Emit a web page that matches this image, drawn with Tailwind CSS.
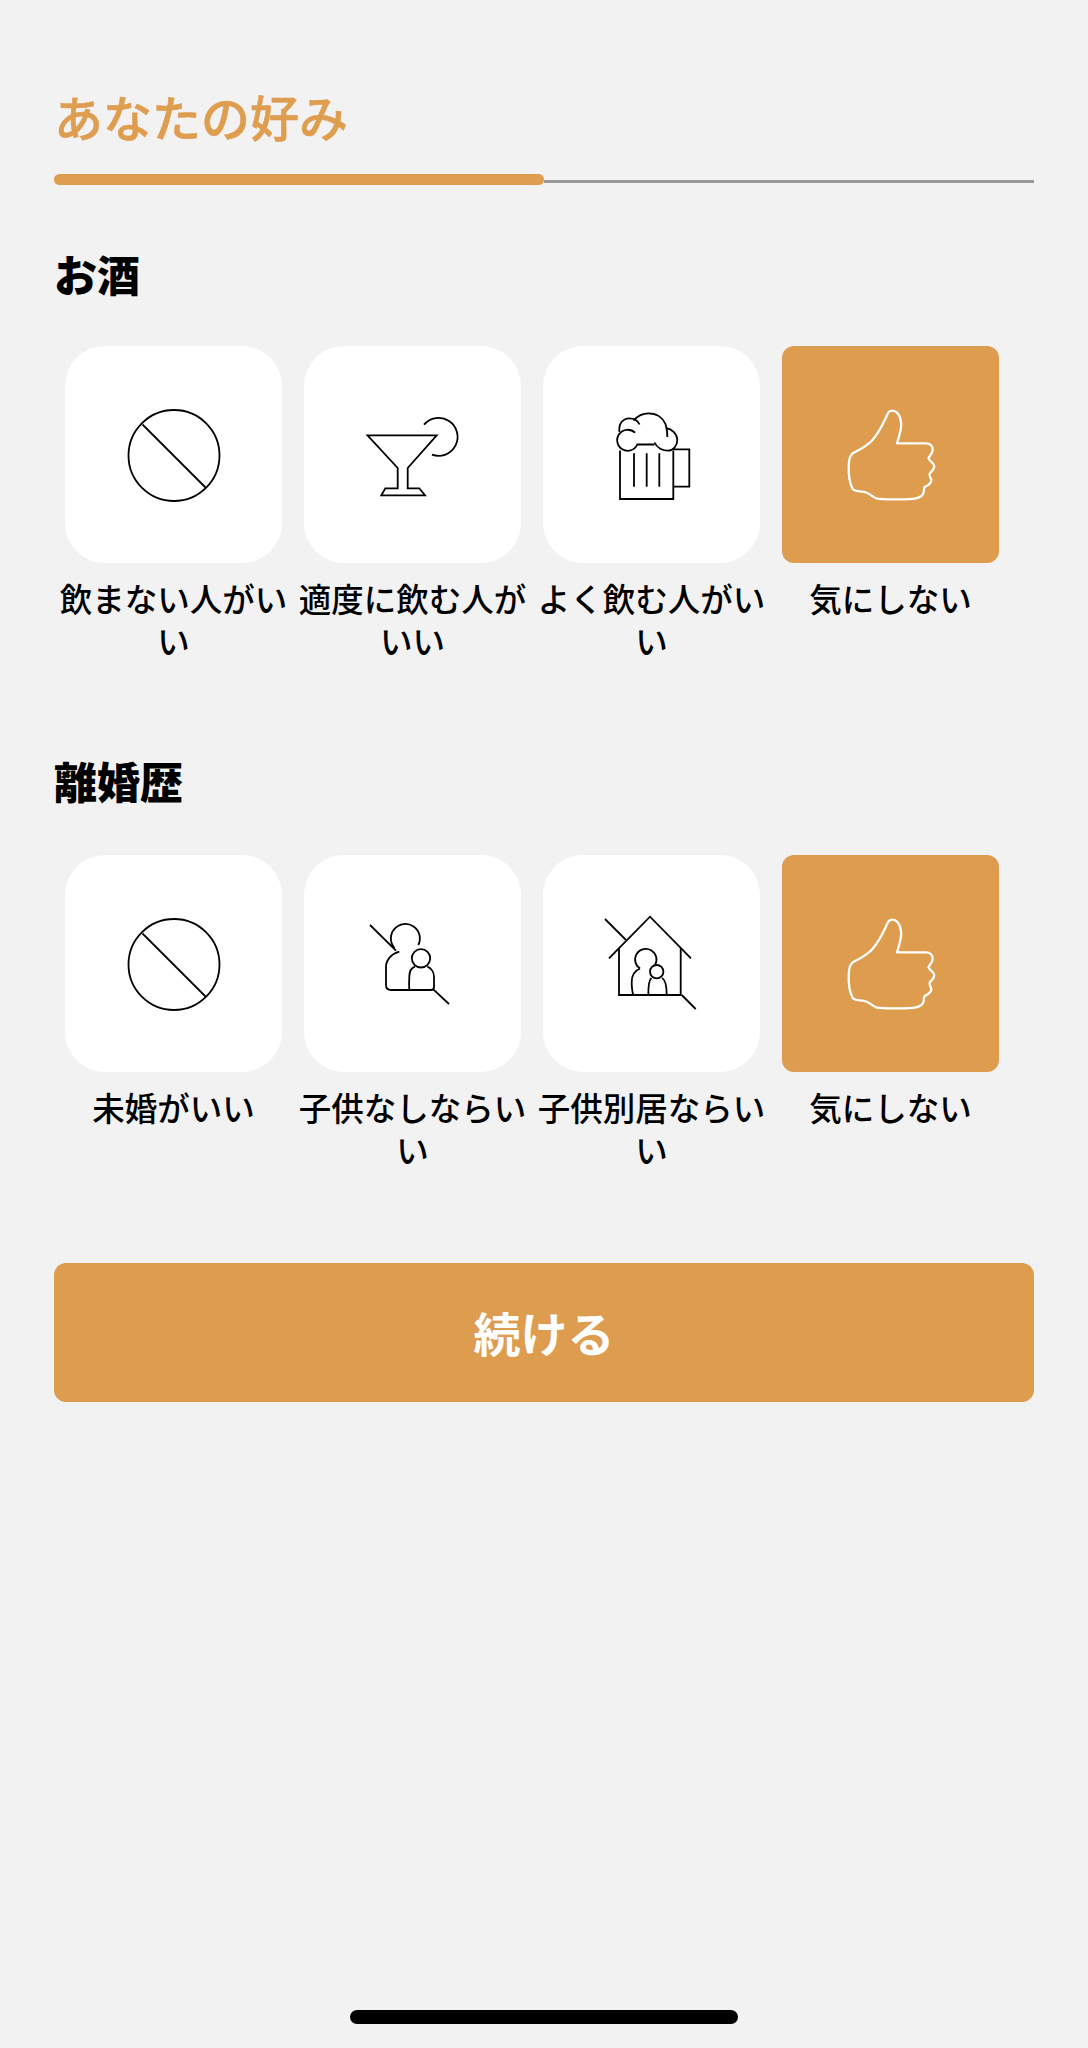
<!DOCTYPE html>
<html lang="ja">
<head>
  <meta charset="UTF-8" />
  <meta name="viewport" content="width=device-width, initial-scale=1.0" />
  <title>あなたの好み</title>
  <script src="https://cdn.jsdelivr.net/npm/@tailwindcss/browser@4"></script>
</head>
<body class="bg-[#f2f2f2] font-['Noto_Sans_CJK_JP',sans-serif] text-black">
<div class="relative h-[2048px] px-[54px] pt-[81px]">

  <!-- Header -->
  <h1 class="text-[49px] leading-[70px] font-medium text-[#df9d50] [-webkit-text-stroke:0.6px_#df9d50]">あなたの好み</h1>
  <div class="mt-[23px] h-[11px] flex items-center">
    <div class="w-[490px] h-[11px] rounded-full bg-[#df9d50]"></div>
    <div class="flex-1 h-[3px] mt-[4px] bg-[#999999]"></div>
  </div>

  <!-- お酒 -->
  <h2 class="mt-[58px] text-[43px] leading-[60px] font-black">お酒</h2>
  <div class="mt-[43px] grid grid-cols-[repeat(4,239px)]">
    <div>
      <div class="mx-[11px] w-[217px] h-[217px] rounded-[40px] bg-white">
        <svg width="217" height="217" fill="none" stroke="#000" stroke-width="1.8"><circle cx="109" cy="109.5" r="45.5"/><path d="M77.5 78.5 140.5 141.5"/></svg>
      </div>
      <p class="mt-[14px] text-center text-[32.5px] leading-[42px] font-medium">飲まない人がいい</p>
    </div>
    <div>
      <div class="mx-[11px] w-[217px] h-[217px] rounded-[40px] bg-white">
        <svg width="217" height="217" fill="none" stroke="#000" stroke-width="1.8"><path d="M63.5 89.3H132.7L103.7 122V142.3H115.3L121 149.3H77.3L81.3 142.3H93.7V122Z"/><path d="M120 78.7A19 19 0 1 1 128 108.7"/></svg>
      </div>
      <p class="mt-[14px] text-center text-[32.5px] leading-[42px] font-medium">適度に飲む人がいい</p>
    </div>
    <div>
      <div class="mx-[11px] w-[217px] h-[217px] rounded-[40px] bg-white">
        <svg width="217" height="217" fill="none" stroke="#000" stroke-width="1.8"><path d="M77 104.5V153H130.3V104.5"/><path d="M130.3 103.3H146.3V140.7H130.3"/><path d="M91 107.3V140.7M103.7 107.3V140.7M116.3 107.3V140.7"/><path d="M92 86.7A10.5 10.5 0 1 0 94.3 98.5H111.5"/><path d="M76.5 86C75 77 81 72.3 86 72.3C91 72.3 95 74.5 96.5 78.5"/><path d="M90.5 74.5C95 69.5 100 67.3 105.5 67.3C114 67.3 120 72 122.5 78C124 83 124.5 87 124.3 91"/><path d="M123 82C129 83 134.3 88 134.3 94C134.3 100 130 104.7 125 104.7C120 104.7 114 102 111.5 96.5"/></svg>
      </div>
      <p class="mt-[14px] text-center text-[32.5px] leading-[42px] font-medium">よく飲む人がいい</p>
    </div>
    <div>
      <div class="mx-[11px] w-[217px] h-[217px] rounded-[12px] bg-[#de9c4f]">
        <svg width="217" height="217" fill="none" stroke="#fff" stroke-width="2.3" stroke-linejoin="round"><path d="M115 97.3C118 88 120 80 119 76C118 68 114 64.5 110 64.7C106.5 65 105.5 67.5 104 71.5C100 80 97 87 90 94.5C84 101 76 104.5 70.7 107.3C67.5 110 67 113 66.8 118C66.3 127 67 136 70.7 143C73 145.5 77 145 81 145.7C87 146.5 89 150 94 152.3C100 153.5 108 153.3 115.7 153.3C123 153.3 129 153.3 134 152.3C139 151.3 141 149.5 141.7 146C142 143.5 141.5 142 143 140.7C146 139 149.5 138 149.3 134C149 131.5 146.5 130 147.8 127.5C149.5 125 152.5 123.5 152.3 120C152 116.5 147 115 146.5 112.3C146.8 110 150.7 108 150.7 104C150.7 100 148 97.3 144 97.3Z"/></svg>
      </div>
      <p class="mt-[14px] text-center text-[32.5px] leading-[42px] font-medium">気にしない</p>
    </div>
  </div>

  <!-- 離婚歴 -->
  <h2 class="mt-[89px] text-[43px] leading-[60px] font-black">離婚歴</h2>
  <div class="mt-[45px] grid grid-cols-[repeat(4,239px)]">
    <div>
      <div class="mx-[11px] w-[217px] h-[217px] rounded-[40px] bg-white">
        <svg width="217" height="217" fill="none" stroke="#000" stroke-width="1.8"><circle cx="109" cy="109.5" r="45.5"/><path d="M77.5 78.5 140.5 141.5"/></svg>
      </div>
      <p class="mt-[14px] text-center text-[32.5px] leading-[42px] font-medium">未婚がいい</p>
    </div>
    <div>
      <div class="mx-[11px] w-[217px] h-[217px] rounded-[40px] bg-white">
        <svg width="217" height="217" fill="none" stroke="#000" stroke-width="1.8"><path d="M66 70 92 95.7"/><path d="M129.3 134.3 145 149"/><path d="M90.5 93A14.5 14.5 0 1 1 114.3 90"/><path d="M95.3 96.7C87 99 82 105 82 112V130C82 133 84 135 87 135H127C129 135 130 134 130 132V122C130 117 127 113 123.3 111.7"/><circle cx="117" cy="103.3" r="9.2"/><path d="M111 111.7C107 113 105.3 117 105.3 122C105 127 105 131 105.3 135"/></svg>
      </div>
      <p class="mt-[14px] text-center text-[32.5px] leading-[42px] font-medium">子供なしならいい</p>
    </div>
    <div>
      <div class="mx-[11px] w-[217px] h-[217px] rounded-[40px] bg-white">
        <svg width="217" height="217" fill="none" stroke="#000" stroke-width="1.8"><path d="M66 103.3 107 61.7 148 103.3"/><path d="M62 64 83 85"/><path d="M76 93.3V140H137.7V93.3"/><path d="M138.7 140 152.7 154"/><path d="M97 113.5A10.7 10.7 0 1 1 112 110"/><path d="M97 113.5C91 116 88.7 120 88.7 127C88.7 132 89 136 90.3 140"/><circle cx="113.7" cy="116.7" r="6.7"/><path d="M108.5 123C105.5 125 105.3 133 105.3 140M119 123C123 125 123.7 133 123.7 140"/></svg>
      </div>
      <p class="mt-[14px] text-center text-[32.5px] leading-[42px] font-medium">子供別居ならいい</p>
    </div>
    <div>
      <div class="mx-[11px] w-[217px] h-[217px] rounded-[12px] bg-[#de9c4f]">
        <svg width="217" height="217" fill="none" stroke="#fff" stroke-width="2.3" stroke-linejoin="round"><path d="M115 97.3C118 88 120 80 119 76C118 68 114 64.5 110 64.7C106.5 65 105.5 67.5 104 71.5C100 80 97 87 90 94.5C84 101 76 104.5 70.7 107.3C67.5 110 67 113 66.8 118C66.3 127 67 136 70.7 143C73 145.5 77 145 81 145.7C87 146.5 89 150 94 152.3C100 153.5 108 153.3 115.7 153.3C123 153.3 129 153.3 134 152.3C139 151.3 141 149.5 141.7 146C142 143.5 141.5 142 143 140.7C146 139 149.5 138 149.3 134C149 131.5 146.5 130 147.8 127.5C149.5 125 152.5 123.5 152.3 120C152 116.5 147 115 146.5 112.3C146.8 110 150.7 108 150.7 104C150.7 100 148 97.3 144 97.3Z"/></svg>
      </div>
      <p class="mt-[14px] text-center text-[32.5px] leading-[42px] font-medium">気にしない</p>
    </div>
  </div>

  <!-- Button -->
  <button class="block mt-[93px] w-[980px] h-[139px] rounded-[12px] bg-[#de9c4f] text-white text-[47px] font-bold">続ける</button>

  <!-- Home indicator -->
  <div class="absolute left-[350px] bottom-[24px] w-[388px] h-[14px] rounded-full bg-black"></div>
</div>
</body>
</html>
